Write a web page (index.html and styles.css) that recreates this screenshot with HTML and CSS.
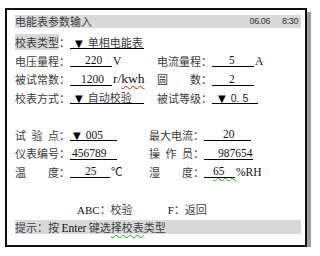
FILE: index.html
```html
<!DOCTYPE html>
<html lang="zh-CN">
<head>
<meta charset="utf-8">
<title>电能表参数输入</title>
<link rel="stylesheet" href="styles.css">
</head>
<body>
<div class="frame">
  <div class="titlebar">
    <span>电能表参数输入</span>
    <span class="clock"><span>06.06</span><span>8:30</span></span>
  </div>
  <div class="rows">
    <div class="row">
      <div class="col col-a">
        <span class="label"><span class="hl">校表类型</span>：</span>
        <span class="field w74 p5"><span class="tri">▼</span>单相电能表</span>
      </div>
    </div>
    <div class="row">
      <div class="col col-a">
        <span class="label">电压量程：</span>
        <span class="field w42 p15 lat">220</span>
        <span class="unit">V</span>
      </div>
      <div class="col">
        <span class="label">电流量程：</span>
        <span class="field w42 p17 lat">5</span>
        <span class="unit">A</span>
      </div>
    </div>
    <div class="row">
      <div class="col col-a">
        <span class="label">被试常数：</span>
        <span class="field w42 p11 lat">1200</span>
        <span class="unit big">r/<span class="spell-red">kwh</span></span>
      </div>
      <div class="col">
        <span class="label"><span class="ch">圆</span><span class="gap22"></span><span class="ch">数</span>：</span>
        <span class="field w42 p17 lat">2</span>
      </div>
    </div>
    <div class="row">
      <div class="col col-a">
        <span class="label">校表方式：</span>
        <span class="field w74 p5"><span class="tri">▼</span>自动校验</span>
      </div>
      <div class="col">
        <span class="label">被试等级：</span>
        <span class="field w46 p6"><span class="tri">▼</span><span class="sans">0. 5</span></span>
      </div>
    </div>
    <div class="row"></div>
    <div class="row">
      <div class="col col-b">
        <span class="label"><span class="ch">试</span><span class="gap5"></span><span class="ch">验</span><span class="gap5"></span><span class="ch">点</span>：</span>
        <span class="field w47 p3"><span class="tri">▼</span><span class="lat">005</span></span>
      </div>
      <div class="col">
        <span class="label">最大电流：</span>
        <span class="field w47 p19 lat">20</span>
      </div>
    </div>
    <div class="row">
      <div class="col col-b">
        <span class="label">仪表编号：</span>
        <span class="field w47 p2 lat">456789</span>
      </div>
      <div class="col">
        <span class="label"><span class="ch">操</span><span class="gap5"></span><span class="ch">作</span><span class="gap5"></span><span class="ch">员</span>：</span>
        <span class="field w49 p14 lat">987654</span>
      </div>
    </div>
    <div class="row">
      <div class="col col-b">
        <span class="label"><span class="ch">温</span><span class="gap22"></span><span class="ch">度</span>：</span>
        <span class="field w40 p15 lat">25</span>
        <span class="unit">℃</span>
      </div>
      <div class="col">
        <span class="label"><span class="ch">湿</span><span class="gap22"></span><span class="ch">度</span>：</span>
        <span class="field w31 p9 lat"><span class="spell-green">65&nbsp;&nbsp;&nbsp;&nbsp;</span></span>
        <span class="unit">%RH</span>
      </div>
    </div>
    <div class="row"></div>
    <div class="row keys">
      <span class="key"><span class="lat">ABC</span>：校验</span>
      <span class="key"><span class="lat">F</span>：返回</span>
    </div>
  </div>
  <div class="hintbar">提示：按 <span class="lat">Enter</span> 键选<span class="spell-green">择校表</span>类型</div>
</div>
</body>
</html>
```

FILE: styles.css
```css
html, body {
  margin: 0;
  padding: 0;
  background: #ffffff;
}

body {
  font-family: "Noto Sans CJK SC", "Noto Sans", sans-serif;
  font-size: 11px;
  color: #3c3c3c;
}

.frame {
  box-sizing: border-box;
  margin: 8px 0 0 5px;
  width: 302px;
  height: 239px;
  border: 2px solid #111111;
  box-shadow: 4px 4px 0 #9c9c9c;
  padding: 5px 4px 0 8px;
  display: flex;
  flex-direction: column;
}

.titlebar {
  height: 13px;
  line-height: 13px;
  background: #d9d9d9;
  display: flex;
  justify-content: space-between;
  align-items: center;
  white-space: nowrap;
}

.clock {
  display: flex;
  gap: 12px;
  padding-right: 3px;
  font-family: "Liberation Sans", "Noto Sans", sans-serif;
  font-size: 9px;
  letter-spacing: -0.4px;
  color: #333333;
}

.rows {
  margin-top: 4.75px;
  display: flex;
  flex-direction: column;
}

.row {
  height: 18.5px;
  display: flex;
  align-items: center;
  white-space: nowrap;
}

.col {
  display: flex;
  align-items: center;
  flex: none;
}

.col-a {
  width: 142px;
}

.col-b {
  width: 134px;
}

.label {
  display: flex;
  align-items: center;
  width: 55px;
  flex: none;
  line-height: 14px;
}

.ch {
  display: inline-block;
  width: 11px;
}

.gap5 {
  display: inline-block;
  width: 5.5px;
}

.gap22 {
  display: inline-block;
  width: 22px;
}

.hl {
  background: #d9d9d9;
  padding: 1px 0;
}

.field {
  display: inline-block;
  flex: none;
  box-sizing: border-box;
  height: 13px;
  line-height: 12px;
  border-bottom: 1px solid #000000;
}

.lat {
  font-family: "Liberation Serif", "Noto Sans CJK SC", serif;
  font-size: 11.5px;
  color: #111111;
}

.sans {
  font-family: "Liberation Sans", "Noto Sans", sans-serif;
  font-size: 10.5px;
  color: #222222;
}

.tri {
  font-family: "DejaVu Sans", sans-serif;
  font-size: 10px;
  color: #000000;
  margin-right: 5px;
}

.unit {
  font-family: "Liberation Serif", "Noto Sans CJK SC", serif;
  font-size: 11.5px;
  margin-left: 1px;
  line-height: 12px;
  color: #111111;
}

.unit.big {
  font-size: 13.5px;
}

.spell-red {
  text-decoration: underline wavy #d21a1a;
  text-decoration-thickness: 1px;
  text-underline-offset: 2px;
}

.spell-green {
  text-decoration: underline wavy #2e9b2e;
  text-decoration-thickness: 1px;
  text-underline-offset: 2px;
}

.w31 { width: 31px; }
.w40 { width: 40px; }
.w42 { width: 42px; }
.w46 { width: 46px; }
.w47 { width: 47px; }
.w49 { width: 49px; }
.w74 { width: 74px; }

.p2 { padding-left: 2px; }
.p3 { padding-left: 3px; }
.p5 { padding-left: 5px; }
.p6 { padding-left: 6px; }
.p9 { padding-left: 9px; }
.p11 { padding-left: 11px; }
.p14 { padding-left: 14px; }
.p15 { padding-left: 15px; }
.p17 { padding-left: 17px; }
.p19 { padding-left: 19px; }

.keys {
  padding-left: 62px;
  gap: 35px;
}

.key .lat {
  font-size: 11px;
}

.hintbar {
  margin-top: 2.25px;
  height: 14px;
  line-height: 14px;
  background: #d9d9d9;
  white-space: nowrap;
}

.hintbar .lat {
  font-size: 11.5px;
}
```
